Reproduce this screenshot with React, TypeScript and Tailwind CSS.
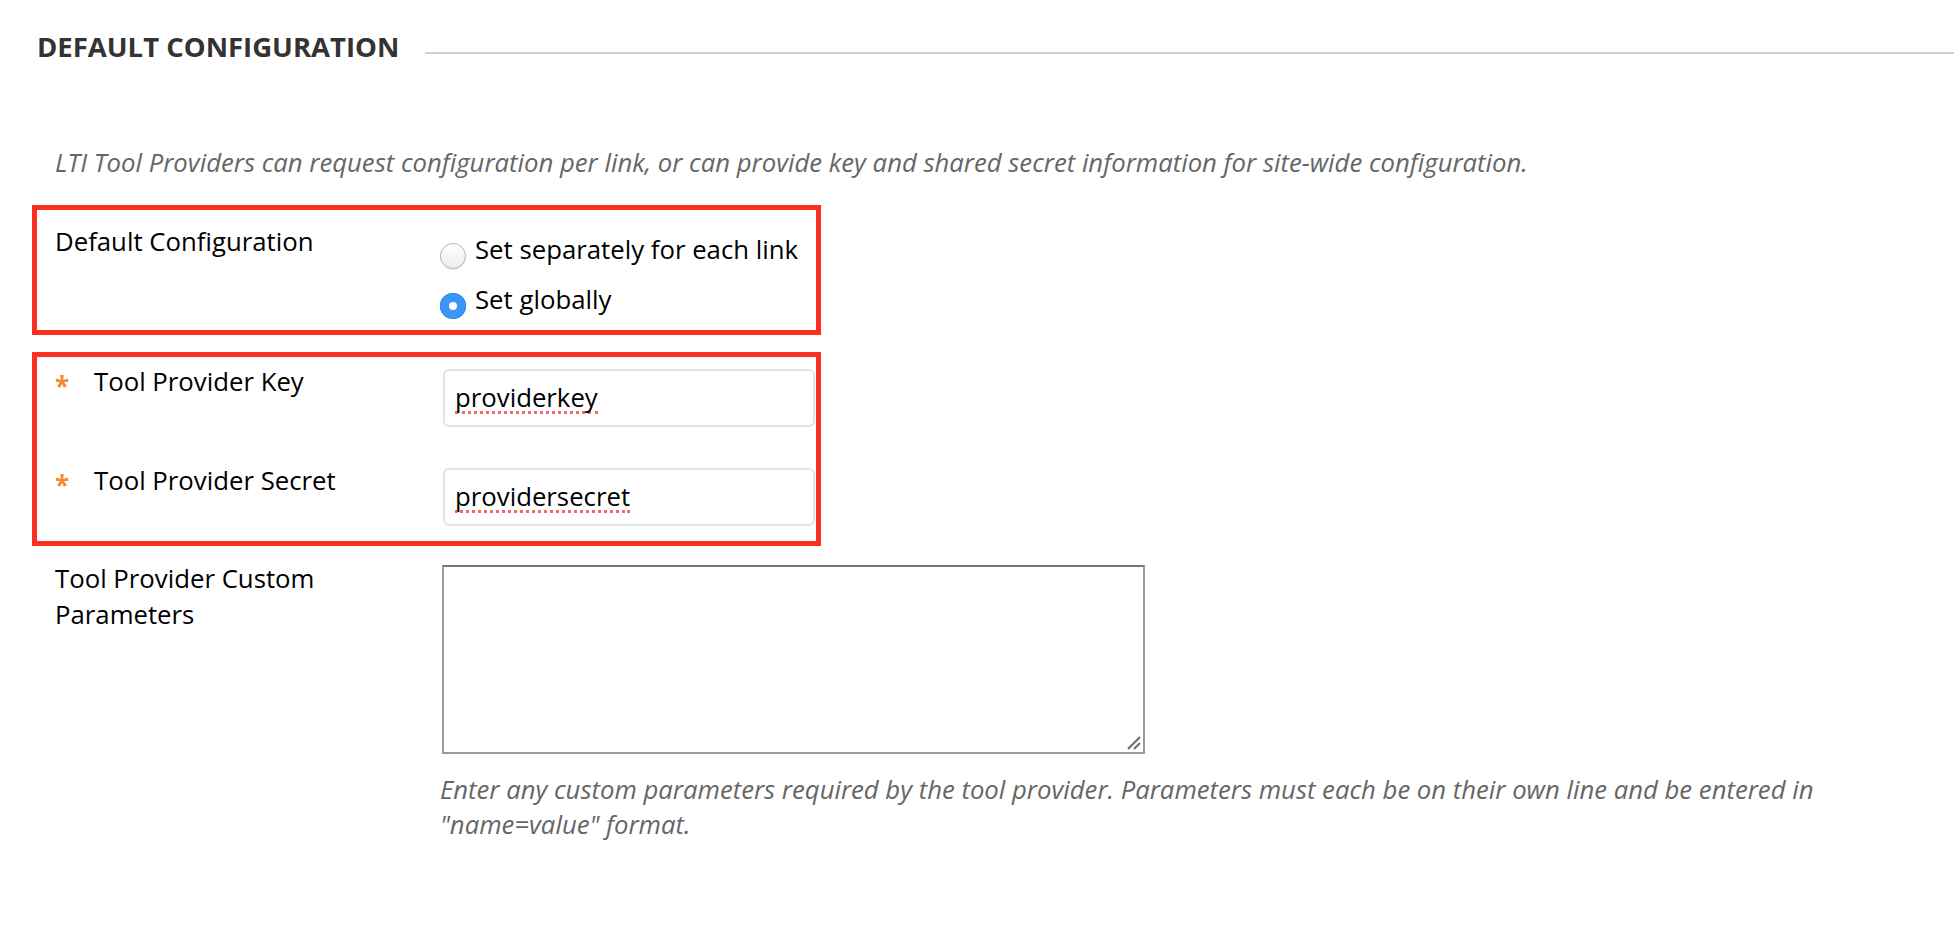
import React from "react";

function Radio({ checked }: { checked: boolean }) {
  if (checked) {
    return (
      <div className="mt-[12px] -ml-[2px] flex h-[26px] w-[26px] shrink-0 items-center justify-center rounded-full bg-[#3b97f7] shadow-[inset_0_0_0_1px_#2f87ea]">
        <div className="h-[8px] w-[8px] rounded-full bg-white" />
      </div>
    );
  }
  return (
    <div className="mt-[12px] -ml-[2px] h-[26px] w-[26px] shrink-0 rounded-full border border-[#b3b3b3] bg-gradient-to-b from-[#ffffff] to-[#eeeeee] shadow-[0_1px_1px_rgba(0,0,0,0.1)]" />
  );
}

function FakeInput({ value }: { value: string }) {
  return (
    <div className="ml-[1px] mt-[6px] flex h-[58px] w-[372px] items-center rounded-[6px] border-2 border-[#e3e3e3] bg-white pl-[10px]">
      <span className="inline-block border-b-[3px] border-dotted border-[#f36a6a] text-[25.75px] leading-[28px] text-black">
        {value}
      </span>
    </div>
  );
}

function RequiredLabel({ text }: { text: string }) {
  return (
    <div className="flex w-[387px] shrink-0">
      <span className="mt-[5px] w-[39px] text-[26px] font-bold leading-[36px] text-[#f6892f]">*</span>
      <span className="text-[25.75px] leading-[36px] text-black">{text}</span>
    </div>
  );
}

export default function App() {
  return (
    <div className="min-h-[934px] w-full overflow-hidden bg-white font-['Open_Sans',sans-serif] text-black">
      <div className="flex items-start pl-[37px] pt-[27px]">
        <h2 className="whitespace-nowrap text-[27.5px] font-bold leading-[40px] text-[#333333]">
          DEFAULT CONFIGURATION
        </h2>
        <div className="ml-[26px] mt-[25px] h-[2px] flex-1 bg-[#cfcfcf]" />
      </div>

      <p className="mt-[78px] pl-[55px] text-[25.7px] italic leading-[36px] text-[#666666]">
        LTI Tool Providers can request configuration per link, or can provide key and shared secret information for site-wide configuration.
      </p>

      <div className="ml-[32px] mt-[24px] w-[789px]">
        <div className="flex border-[5px] border-[#fc2e1f] pb-[13px] pl-[18px] pt-[13px]">
          <div className="w-[387px] shrink-0 text-[25.75px] leading-[36px] text-black">Default Configuration</div>
          <div className="mt-[8px] flex flex-col gap-[14px]">
            <div className="flex h-[36px] items-start">
              <Radio checked={false} />
              <span className="ml-[9px] whitespace-nowrap text-[25.75px] leading-[36px] text-black">Set separately for each link</span>
            </div>
            <div className="flex h-[36px] items-start">
              <Radio checked={true} />
              <span className="ml-[9px] whitespace-nowrap text-[25.75px] leading-[36px] text-black">Set globally</span>
            </div>
          </div>
        </div>

        <div className="mt-[17px] border-[5px] border-[#fc2e1f] pb-[15px] pl-[18px] pt-[6px]">
          <div className="flex items-start">
            <RequiredLabel text="Tool Provider Key" />
            <FakeInput value="providerkey" />
          </div>
          <div className="mt-[35px] flex items-start">
            <RequiredLabel text="Tool Provider Secret" />
            <FakeInput value="providersecret" />
          </div>
        </div>
      </div>

      <div className="ml-[55px] mt-[14px] flex items-start">
        <div className="w-[387px] shrink-0">
          <div className="max-w-[330px] text-[25.75px] leading-[36px] text-black">Tool Provider Custom Parameters</div>
        </div>
        <div className="relative mt-[5px] h-[189px] w-[703px] border-2 border-[#9a9a9a] border-t-[#777777] bg-white">
          <svg className="absolute bottom-[1px] right-[1px]" width="16" height="16" viewBox="0 0 16 16">
            <line x1="2" y1="14" x2="14" y2="2" stroke="#6a6a6a" strokeWidth="2" />
            <line x1="8" y1="14" x2="14" y2="8" stroke="#6a6a6a" strokeWidth="2" />
          </svg>
        </div>
      </div>

      <p className="ml-[440px] mt-[18px] w-[1440px] text-[25.7px] italic leading-[35px] text-[#666666]">
        Enter any custom parameters required by the tool provider. Parameters must each be on their own line and be entered in "name=value" format.
      </p>
    </div>
  );
}
